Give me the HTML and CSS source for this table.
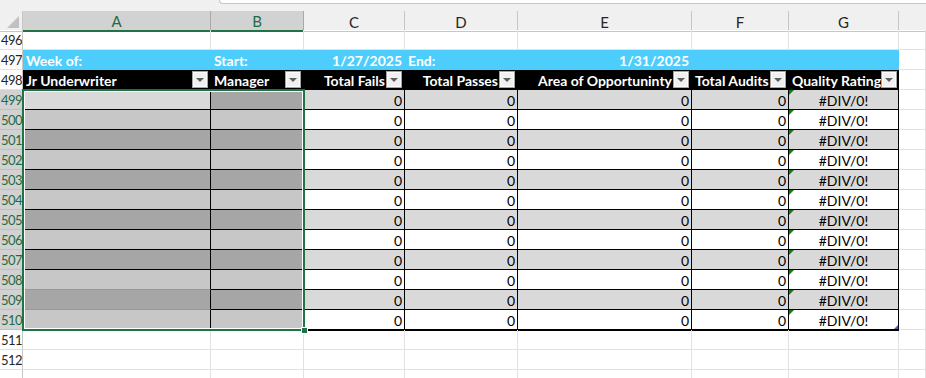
FILE: index.html
```html
<!DOCTYPE html>
<html lang="en">
<head>
<meta charset="utf-8">
<title>Weekly Audit Sheet</title>
<link rel="stylesheet" href="styles.css">
</head>
<body>
<div class="app">
  <div class="topbar"><div class="formula-edge"></div></div>
  <div class="sheet">
    <div class="row colhead">
      <div class="corner"><span class="corner-tri"></span></div>
      <div class="ch ch-sel">A</div>
      <div class="ch ch-sel">B</div>
      <div class="ch">C</div>
      <div class="ch">D</div>
      <div class="ch">E</div>
      <div class="ch">F</div>
      <div class="ch">G</div>
      <div class="ch ch-last"></div>
    </div>

    <div class="row">
      <div class="rh"><span>496</span></div>
      <div class="c"></div><div class="c"></div><div class="c"></div><div class="c"></div>
      <div class="c"></div><div class="c"></div><div class="c"></div><div class="c"></div>
    </div>

    <div class="row">
      <div class="rh"><span>497</span></div>
      <div class="c band">Week of:</div>
      <div class="c band">Start:</div>
      <div class="c band num">1/27/2025</div>
      <div class="c band">End:</div>
      <div class="c band num">1/31/2025</div>
      <div class="c band"></div>
      <div class="c band"></div>
      <div class="c"></div>
    </div>

    <div class="row">
      <div class="rh"><span>498</span></div>
      <div class="c th"><span class="th-text">Jr Underwriter</span><span class="filter"></span></div>
      <div class="c th"><span class="th-text">Manager</span><span class="filter"></span></div>
      <div class="c th th-right"><span class="th-text">Total Fails</span><span class="filter"></span></div>
      <div class="c th th-right"><span class="th-text">Total Passes</span><span class="filter"></span></div>
      <div class="c th th-right"><span class="th-text">Area of Opportuninty</span><span class="filter"></span></div>
      <div class="c th"><span class="th-text">Total Audits</span><span class="filter"></span></div>
      <div class="c th"><span class="th-text">Quality Rating</span><span class="filter"></span></div>
      <div class="c"></div>
    </div>

    <div class="row stripe">
      <div class="rh rh-sel"><span>499</span></div>
      <div class="c name light"></div><div class="c mgr dark"></div>
      <div class="c td num">0</div><div class="c td num">0</div><div class="c td num">0</div><div class="c td num">0</div>
      <div class="c td err">#DIV/0!</div><div class="c"></div>
    </div>
    <div class="row">
      <div class="rh rh-sel"><span>500</span></div>
      <div class="c name mid"></div><div class="c mgr mid"></div>
      <div class="c td num">0</div><div class="c td num">0</div><div class="c td num">0</div><div class="c td num">0</div>
      <div class="c td err">#DIV/0!</div><div class="c"></div>
    </div>
    <div class="row stripe">
      <div class="rh rh-sel"><span>501</span></div>
      <div class="c name dark"></div><div class="c mgr dark"></div>
      <div class="c td num">0</div><div class="c td num">0</div><div class="c td num">0</div><div class="c td num">0</div>
      <div class="c td err">#DIV/0!</div><div class="c"></div>
    </div>
    <div class="row">
      <div class="rh rh-sel"><span>502</span></div>
      <div class="c name mid"></div><div class="c mgr mid"></div>
      <div class="c td num">0</div><div class="c td num">0</div><div class="c td num">0</div><div class="c td num">0</div>
      <div class="c td err">#DIV/0!</div><div class="c"></div>
    </div>
    <div class="row stripe">
      <div class="rh rh-sel"><span>503</span></div>
      <div class="c name dark"></div><div class="c mgr dark"></div>
      <div class="c td num">0</div><div class="c td num">0</div><div class="c td num">0</div><div class="c td num">0</div>
      <div class="c td err">#DIV/0!</div><div class="c"></div>
    </div>
    <div class="row">
      <div class="rh rh-sel"><span>504</span></div>
      <div class="c name mid"></div><div class="c mgr mid"></div>
      <div class="c td num">0</div><div class="c td num">0</div><div class="c td num">0</div><div class="c td num">0</div>
      <div class="c td err">#DIV/0!</div><div class="c"></div>
    </div>
    <div class="row stripe">
      <div class="rh rh-sel"><span>505</span></div>
      <div class="c name dark"></div><div class="c mgr dark"></div>
      <div class="c td num">0</div><div class="c td num">0</div><div class="c td num">0</div><div class="c td num">0</div>
      <div class="c td err">#DIV/0!</div><div class="c"></div>
    </div>
    <div class="row">
      <div class="rh rh-sel"><span>506</span></div>
      <div class="c name mid"></div><div class="c mgr mid"></div>
      <div class="c td num">0</div><div class="c td num">0</div><div class="c td num">0</div><div class="c td num">0</div>
      <div class="c td err">#DIV/0!</div><div class="c"></div>
    </div>
    <div class="row stripe">
      <div class="rh rh-sel"><span>507</span></div>
      <div class="c name dark"></div><div class="c mgr dark"></div>
      <div class="c td num">0</div><div class="c td num">0</div><div class="c td num">0</div><div class="c td num">0</div>
      <div class="c td err">#DIV/0!</div><div class="c"></div>
    </div>
    <div class="row">
      <div class="rh rh-sel"><span>508</span></div>
      <div class="c name mid name-blue"></div><div class="c mgr mid"></div>
      <div class="c td num">0</div><div class="c td num">0</div><div class="c td num">0</div><div class="c td num">0</div>
      <div class="c td err">#DIV/0!</div><div class="c"></div>
    </div>
    <div class="row stripe">
      <div class="rh rh-sel"><span>509</span></div>
      <div class="c name dark name-blue"></div><div class="c mgr dark"></div>
      <div class="c td num">0</div><div class="c td num">0</div><div class="c td num">0</div><div class="c td num">0</div>
      <div class="c td err">#DIV/0!</div><div class="c"></div>
    </div>
    <div class="row last-row">
      <div class="rh rh-sel"><span>510</span></div>
      <div class="c name mid"></div><div class="c mgr mid"></div>
      <div class="c td num">0</div><div class="c td num">0</div><div class="c td num">0</div><div class="c td num">0</div>
      <div class="c td err end-cell">#DIV/0!</div><div class="c"></div>
    </div>

    <div class="row">
      <div class="rh"><span>511</span></div>
      <div class="c"></div><div class="c"></div><div class="c"></div><div class="c"></div>
      <div class="c"></div><div class="c"></div><div class="c"></div><div class="c"></div>
    </div>
    <div class="row">
      <div class="rh"><span>512</span></div>
      <div class="c"></div><div class="c"></div><div class="c"></div><div class="c"></div>
      <div class="c"></div><div class="c"></div><div class="c"></div><div class="c"></div>
    </div>
    <div class="row">
      <div class="rh"></div>
      <div class="c"></div><div class="c"></div><div class="c"></div><div class="c"></div>
      <div class="c"></div><div class="c"></div><div class="c"></div><div class="c"></div>
    </div>

    <div class="selection"><span class="fill-handle"></span></div>
  </div>
</div>
</body>
</html>
```

FILE: styles.css
```css
* {
  box-sizing: border-box;
}

html, body {
  margin: 0;
  padding: 0;
  background: #ffffff;
}

body {
  font-family: Lato, "Liberation Sans", sans-serif;
  font-size: 14px;
  color: #000000;
  width: 926px;
  height: 378px;
  overflow: hidden;
}

.app {
  display: flex;
  flex-direction: column;
  height: 378px;
}

/* strip under the formula bar */
.topbar {
  height: 11px;
  background: #f0f0f0;
  display: flex;
  justify-content: flex-end;
}

.formula-edge {
  width: 707px;
  height: 4px;
  background: #ffffff;
  border-left: 1px solid #c6c6c6;
  border-bottom: 1px solid #c6c6c6;
  border-bottom-left-radius: 4px;
}

.sheet {
  position: relative;
  flex: 1;
  overflow: hidden;
}

.row {
  display: grid;
  grid-template-columns: 23px 188px 93px 101px 113px 174px 97px 110px 27px;
  height: 20px;
}

/* column letters */
.colhead {
  height: 19px;
  background: #f0f0f0;
}

.corner {
  border-right: 1px solid #c6c6c6;
  border-bottom: 1px solid #c6c6c6;
  position: relative;
}

.corner-tri {
  position: absolute;
  right: 3px;
  bottom: 3px;
  width: 0;
  height: 0;
  border-left: 12px solid transparent;
  border-bottom: 12px solid #c1c1c1;
}

.ch {
  display: flex;
  align-items: center;
  justify-content: center;
  font-size: 15px;
  color: #262626;
  border-right: 1px solid #c6c6c6;
  border-bottom: 1px solid #c6c6c6;
  padding-top: 1px;
}

.ch-sel {
  background: #d2d2d2;
  color: #1e6b44;
  border-right-color: #a9a9a9;
  border-bottom: 2px solid #217346;
}

.ch-last {
  border-right: none;
}

/* row numbers */
.rh {
  display: flex;
  justify-content: flex-end;
  padding: 1px 0 0 0;
  font-size: 13px;
  line-height: 19px;
  color: #262626;
  background: #ffffff;
  border-right: 1px solid #c6c6c6;
  border-bottom: 1px solid #e1e1e1;
  overflow: hidden;
  white-space: nowrap;
}

.rh span {
  flex: none;
  letter-spacing: -0.5px;
}

.rh-sel {
  background: #d2d2d2;
  color: #1e6b44;
  border-bottom-color: #c0c0c0;
}

/* plain cells */
.c {
  border-right: 1px solid #e1e1e1;
  border-bottom: 1px solid #e1e1e1;
  line-height: 19px;
  padding: 1px 2px 0;
  white-space: nowrap;
  overflow: hidden;
}

.num {
  text-align: right;
}

/* week banner */
.band {
  background: #4dcdfb;
  border-color: #4dcdfb;
  color: #ffffff;
  font-weight: 700;
  padding-left: 3px;
}

/* table header */
.th {
  background: #000000;
  border-color: #000000;
  color: #ffffff;
  font-weight: 700;
  display: flex;
  align-items: center;
  padding: 0 2px 0 3px;
}

.th-text {
  padding-top: 2px;
}

.th .filter {
  margin-left: auto;
}

.th-right {
  justify-content: flex-end;
}

.th-right .filter {
  margin-left: 1px;
}

.filter {
  position: relative;
  flex: none;
  width: 16px;
  height: 17px;
  background: #f0f0f0;
  border: 1px solid #a3a3a3;
  box-shadow: inset 0 0 0 1px #fbfbfb;
}

.filter::after {
  content: "";
  position: absolute;
  left: 3px;
  top: 6px;
  border-left: 4px solid transparent;
  border-right: 4px solid transparent;
  border-top: 4px solid #5f5f5f;
}

/* table body */
.td {
  background: #ffffff;
  border-right: 1px solid #000000;
  border-bottom: 1px solid #000000;
}

.stripe .td {
  background: #d9d9d9;
}

.name,
.mgr {
  border-bottom: 1px solid #000000;
}

.name {
  border-right: 1px solid #000000;
}

.name-blue {
  border-bottom-color: #7f9ccc;
}

.light { background: #d9d9d9; }
.mid { background: #c7c7c7; }
.dark { background: #a6a6a6; }

.err {
  position: relative;
  text-align: center;
}

/* error indicator in the corner of a formula cell */
.err::before {
  content: "";
  position: absolute;
  left: 0;
  top: 0;
  border-top: 5px solid #107c10;
  border-right: 5px solid transparent;
}

.last-row .td {
  box-shadow: 0 1px 0 #000000;
}

.end-cell::after {
  content: "";
  position: absolute;
  right: 0;
  bottom: 0;
  border-bottom: 4px solid #4a5fb5;
  border-left: 4px solid transparent;
}

/* selected range A499:B510 */
.selection {
  position: absolute;
  left: 22px;
  top: 78px;
  width: 283px;
  height: 242px;
  border: 2px solid #217346;
  box-shadow: inset 0 0 0 1px #ffffff;
  pointer-events: none;
}

.fill-handle {
  position: absolute;
  right: -5px;
  bottom: -5px;
  width: 7px;
  height: 7px;
  background: #217346;
  border: 1px solid #ffffff;
}
```
